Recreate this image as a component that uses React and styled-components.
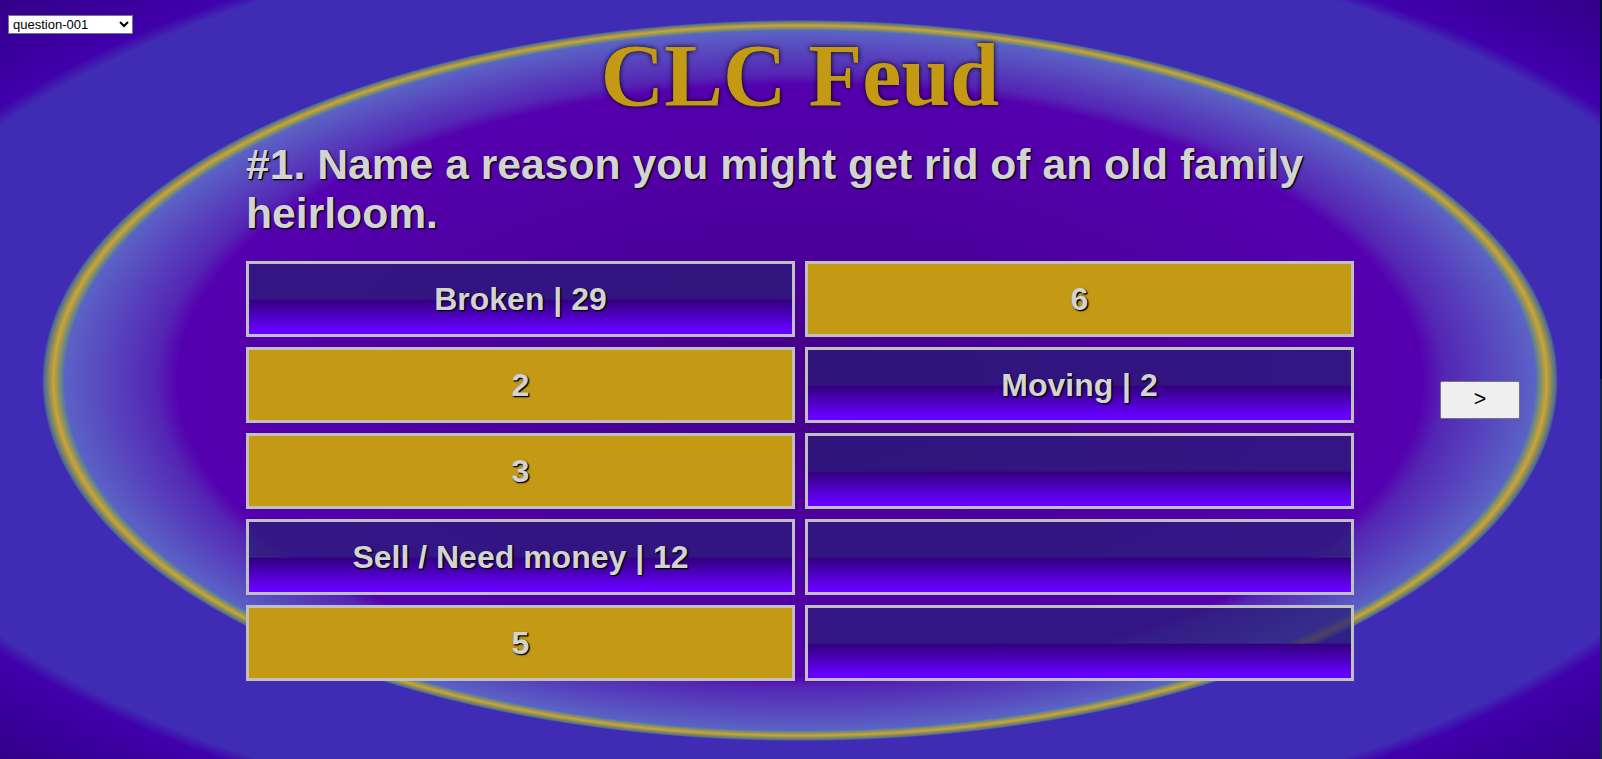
import React, { useState } from 'react';
import styled, { createGlobalStyle } from 'styled-components';

const Global = createGlobalStyle`
  html { background: linear-gradient(#001038 50%, #14284a 50%); }
  body { margin: 0; }
  * { box-sizing: border-box; }
`;

const crispShadow = '1px 1px 0 #000, 1px 1px 2px #000';

const Page = styled.div`
  min-height: 100vh;
  margin-right: 2px;
  display: flex;
  flex-direction: column;
  font-family: "Liberation Sans", Arial, sans-serif;
  background: radial-gradient(
    ellipse farthest-corner at 50% calc(50% + 1px),
    #440088 0%, #5500af 55%, #5426b4 57%, #5b62c6 65%, #5c7e98 65.2%,
    #cba62e 66%, #4e6e90 66.8%, #402cb4 67%, #402cb4 85%, #4000ab 87%, #320088 100%
  );
`;

const Stage = styled.div`
  flex: 1;
  display: grid;
  grid-template-columns: 1fr minmax(0, 1108px) 1fr;
`;

const Picker = styled.select`
  justify-self: start;
  align-self: start;
  width: 125px;
  height: 19px;
  margin: 15px 0 0 8px;
  font: 13px "Liberation Sans", Arial, sans-serif;
  color: #000;
  background-color: #fff;
  border: 1px solid #767676;
`;

const Board = styled.main`
  padding-top: 26px;
`;

const Title = styled.h1`
  margin: 0;
  text-align: center;
  font: bold 66pt/100px "Liberation Serif", "Times New Roman", serif;
  color: #c49a14;
  text-shadow: 0 0 5px #000;
`;

const Question = styled.h2`
  margin: 14px 0 23px;
  font-size: 32pt;
  line-height: 49px;
  color: #d3d3d3;
  text-shadow: ${crispShadow};
`;

const Answers = styled.div`
  display: grid;
  grid-template-columns: 1fr 1fr;
  grid-template-rows: repeat(5, auto);
  grid-auto-flow: column;
  gap: 10px;
`;

const Tile = styled.button`
  height: 76px;
  padding: 0;
  border: 3px solid #c0c0c0;
  font: bold 24pt "Liberation Sans", Arial, sans-serif;
  color: #d3d3d3;
  text-shadow: ${crispShadow};
  background: ${(p) =>
    p.$hidden
      ? '#c49a14'
      : 'linear-gradient(rgba(41, 28, 119, 0.75) 50%, #330080 52%, #6600ff 95%)'};
`;

const Next = styled.button`
  justify-self: center;
  align-self: center;
  width: 80px;
  height: 38px;
  margin: 40px 0 0 6px;
  padding: 0;
  font: 16pt "Liberation Sans", Arial, sans-serif;
  color: #000;
  background: #efefef;
  border: 1px solid #767676;
  border-radius: 2px;
`;

const answers = [
  { text: 'Broken | 29', open: true },
  { text: '2' },
  { text: '3' },
  { text: 'Sell / Need money | 12', open: true },
  { text: '5' },
  { text: '6' },
  { text: 'Moving | 2', open: true },
  { text: '', open: true },
  { text: '', open: true },
  { text: '', open: true },
];

export default function App() {
  const [question, setQuestion] = useState('question-001');
  return (
    <Page>
      <Global />
      <Stage>
        <Picker aria-label="Question" value={question} onChange={(e) => setQuestion(e.target.value)}>
          <option>question-001</option>
        </Picker>
        <Board>
          <Title>CLC Feud</Title>
          <Question>#1. Name a reason you might get rid of an old family heirloom.</Question>
          <Answers>
            {answers.map((a, i) => (
              <Tile key={i} $hidden={!a.open} aria-label={a.text || 'Empty answer'}>{a.text}</Tile>
            ))}
          </Answers>
        </Board>
        <Next aria-label="Next question">&gt;</Next>
      </Stage>
    </Page>
  );
}
